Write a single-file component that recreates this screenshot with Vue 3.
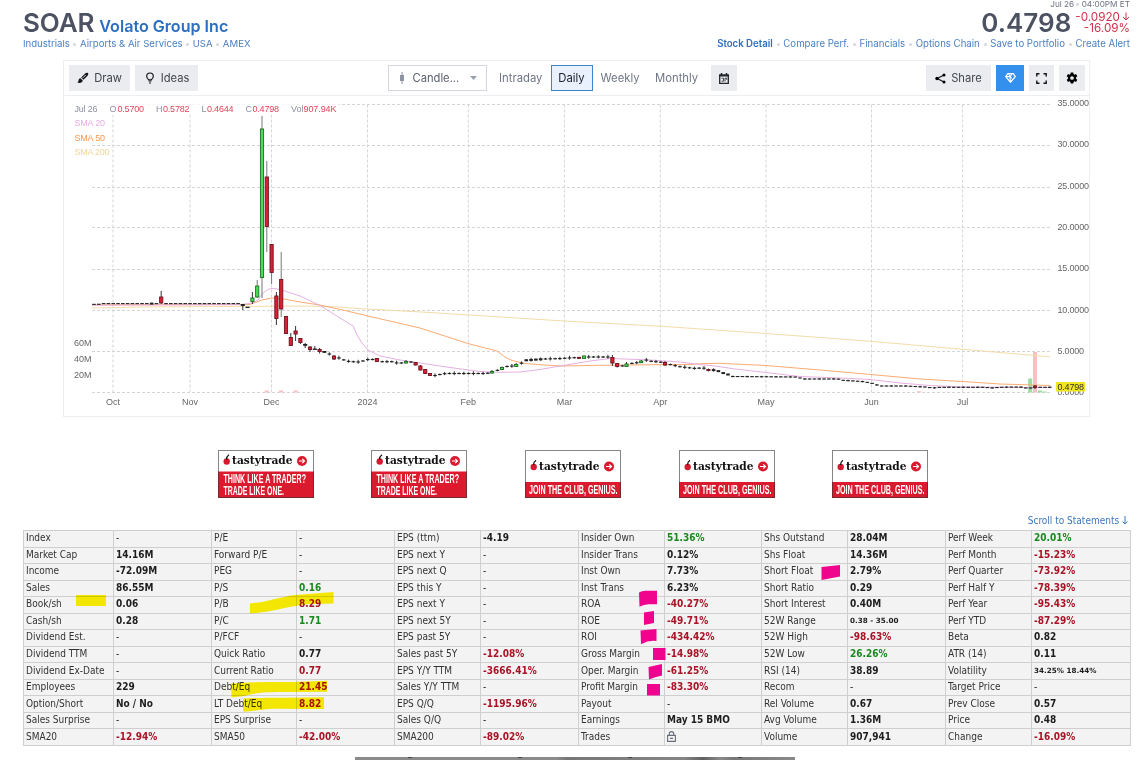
<template>
  <div class="page">
    <header class="quote-header">
      <div class="company">
        <div class="title">
          <h1>SOAR</h1>
          <h2>Volato Group Inc</h2>
        </div>
        <div class="links">
          <template v-for="(tag, i) in tags" :key="tag">
            <i v-if="i" class="dot"></i><a>{{ tag }}</a>
          </template>
        </div>
      </div>
      <div class="quote">
        <div class="date">Jul 26 <i class="dot"></i> 04:00PM ET</div>
        <div class="price-row">
          <span class="price">0.4798</span>
          <span class="change">
            <span>-0.0920<svg width="8" height="9" viewBox="0 0 8 9"><path d="M4 .5v7.4M1 5l3 3 3-3" /></svg></span>
            <span>-16.09<small>%</small></span>
          </span>
        </div>
        <div class="links right">
          <template v-for="(tab, i) in tabs" :key="tab">
            <i v-if="i" class="dot"></i><a :class="{ current: i === 0 }">{{ tab }}</a>
          </template>
        </div>
      </div>
    </header>

    <section class="chart">
      <div class="toolbar">
        <div class="group">
          <button class="btn draw">
            <svg width="12" height="12" viewBox="0 0 12 12">
              <path d="M10.9 1.1c-.8-.7-2-.4-3 .6L4.200 5.500l2.300 2.300 3.800-3.700c1-1 1.300-2.300.6-3zM3.500 6.200c-1.200.1-1.700.9-1.900 2-.1.900-.5 1.700-1.200 2.300 2 .9 5.100.5 5.400-2z" fill="#14161a" />
              <path d="M5.800 5.900l3-3" stroke="#ebecef" stroke-width=".9" />
            </svg>
            Draw
          </button>
          <button class="btn ideas">
            <svg width="12" height="12" viewBox="0 0 12 12" fill="none" stroke="#14161a">
              <path d="M4.700 7.800C3.400 6.900 2.700 5.900 2.700 4.300a3.300 3.300 0 0 1 6.600 0c0 1.600-.7 2.600-2 3.500z" stroke-width="1.200" />
              <path d="M4.500 9h3M5 11h2" stroke-width="1.200" />
            </svg>
            Ideas
          </button>
        </div>
        <div class="group mid">
          <button class="select">
            <svg width="6" height="12" viewBox="0 0 6 12">
              <path d="M1 3h4v6H1zM2.500 0h1v12h-1z" fill="#8e94a3" />
            </svg>
            <span>Candle...</span>
            <svg width="7" height="4" viewBox="0 0 7 4"><path d="M0 0h7L3.500 4z" fill="#9a9fae" /></svg>
          </button>
          <a class="range intraday">Intraday</a>
          <a class="range active">Daily</a>
          <a class="range weekly">Weekly</a>
          <a class="range monthly">Monthly</a>
          <button class="btn icon">
            <svg width="10" height="11" viewBox="0 0 10 11" fill="none" stroke="#22252b">
              <path d="M.7 2h8.600v8.300H.7z" stroke-width="1.300" />
              <path d="M0 2.700h10M2.500 0v2M7.500 0v2" stroke-width="1.500" />
              <path d="M2.500 5.200h2v3h-2M6 8.500V5.200h1.700v1.600" stroke-width=".8" />
            </svg>
          </button>
        </div>
        <div class="group">
          <button class="btn share">
            <svg width="11" height="11" viewBox="0 0 11 11">
              <path d="M9 2L2.200 5.500 9 9" fill="none" stroke="#14161a" stroke-width="1.200" />
              <circle cx="9" cy="2" r="1.500" /><circle cx="2" cy="5.500" r="1.700" /><circle cx="9" cy="9" r="1.500" />
            </svg>
            Share
          </button>
          <button class="btn elite">
            <svg width="11" height="10" viewBox="0 0 11 10" fill="none" stroke="#fff">
              <path d="M2.800.7h5.400l2.100 2.900L5.500 9.200.7 3.600z" stroke-width="1.300" />
              <path d="M.7 3.600h4.200L3.800 1.200M5.500 9L4.900 3.600l2-2.500M5 3.800l1.800 1.400" stroke-width="1.100" />
            </svg>
          </button>
          <button class="btn full">
            <svg width="11" height="11" viewBox="0 0 11 11" fill="none" stroke="#14161a" stroke-width="1.400">
              <path d="M.8 3.500V.8h2.700M7.500.8h2.700v2.700M10.200 7.500v2.700H7.500M3.500 10.200H.8V7.500" />
            </svg>
          </button>
          <button class="btn icon">
            <svg width="12" height="12" viewBox="0 0 24 24">
              <path fill-rule="evenodd" d="M9.500 1h5l.6 3.200 1.900 1.100 3.100-1.100 2.500 4.300-2.500 2.200v2.600l2.500 2.200-2.500 4.300-3.100-1.100-1.900 1.100-.6 3.200h-5l-.6-3.200L7 18.700l-3.100 1.100-2.500-4.300 2.500-2.200v-2.600L1.400 8.500l2.500-4.300L7 5.300l1.900-1.100zM12 8.300a3.700 3.700 0 1 0 0 7.400 3.700 3.700 0 0 0 0-7.400z" />
            </svg>
          </button>
        </div>
      </div>

      <svg class="plot" width="1025" height="320" viewBox="64 96 1025 320">
        <g class="grid">
          <line v-for="y in gridY" :key="'h' + y" x1="92" :y1="y" x2="1050" :y2="y" />
          <line v-for="m in months" :key="m.label" :x1="m.x" y1="104.500" :x2="m.x" y2="392.500" />
        </g>

        <rect v-for="v in volumes" :key="v.x" :x="v.x - 2" :y="392.500 - v.h" width="4" :height="v.h" :fill="v.up ? '#9bdc9f' : '#fcbdc3'" />

        <polyline class="sma" :points="sma200" stroke="#f3dcaa" />
        <polyline class="sma" :points="sma50" stroke="#fbab73" />
        <polyline class="sma" :points="sma20" stroke="#e7b0e2" />

        <g v-for="c in candles" :key="c.x">
          <line :x1="c.x" :y1="c.high" :x2="c.x" :y2="c.low" :stroke="c.high < 290 ? '#777' : '#333'" />
          <rect :x="c.x - c.w / 2" :y="c.top" :width="c.w" :height="c.bottom - c.top" :fill="c.fill" :stroke="c.stroke" :stroke-width="c.line" />
        </g>

        <g class="axis">
          <text v-for="m in months" :key="m.label" :x="m.x" y="405" text-anchor="middle">{{ m.label }}</text>
          <text v-for="p in prices" :key="p.label" x="1057.500" :y="p.y" :textLength="p.label.length > 6 ? 31.500 : 26.500">{{ p.label }}</text>
          <text x="74" y="346">60M</text>
          <text x="74" y="362.300">40M</text>
          <text x="74" y="378.300">20M</text>
        </g>
        <rect x="1056" y="382" width="29" height="9.500" fill="#f2e71f" />
        <text class="last" x="1057.500" y="390" textLength="26.500">0.4798</text>

        <rect x="73" y="101" width="266" height="14" fill="#fff" opacity=".75" />
        <g class="ohlc">
          <text v-for="t in ohlc" :key="t.text" :x="t.x" y="112" :textLength="t.w" :class="{ val: t.val }">{{ t.text }}</text>
          <text x="74.500" y="126" textLength="30.500" fill="#e9ace5">SMA 20</text>
          <text x="74.500" y="141" textLength="30.500" fill="#f89650">SMA 50</text>
          <text x="74.500" y="155" textLength="35" fill="#efd59b">SMA 200</text>
        </g>
      </svg>
    </section>

    <div class="ads">
      <svg v-for="(ad, i) in ads" :key="i" width="96" height="48" viewBox="0 0 96 48">
        <rect width="96" height="48" fill="#fff" />
        <rect y="21.500" width="96" height="26.500" fill="#dc1a2d" v-if="ad.length > 1" />
        <rect y="32" width="96" height="16" fill="#dc1a2d" v-else />
        <rect x=".5" y=".5" width="95" height="47" fill="none" stroke="#333" stroke-opacity=".6" />
        <g :transform="ad.length > 1 ? 'translate(0 0)' : 'translate(0 5.500)'">
          <circle cx="8.700" cy="11.500" r="3.200" fill="#d31b2f" />
          <path d="M8.500 9.500c0-2 .8-3.600 2.500-4.800" fill="none" stroke="#111" stroke-width="1.200" />
          <text class="brand" x="14" y="14.300" textLength="60.500" lengthAdjust="spacingAndGlyphs">tastytrade</text>
          <circle cx="84" cy="11" r="5" fill="#dc1a2d" />
          <path d="M81 11h5.500M84.300 8.800l2.200 2.200-2.200 2.200" fill="none" stroke="#fff" stroke-width="1.200" />
        </g>
        <template v-if="ad.length > 1">
          <text class="slogan" x="5.500" y="33.300" textLength="82.500" lengthAdjust="spacingAndGlyphs">{{ ad[0] }}</text>
          <text class="slogan" x="5.500" y="44.700" textLength="60.500" lengthAdjust="spacingAndGlyphs">{{ ad[1] }}</text>
        </template>
        <text v-else class="slogan" x="4" y="44.200" textLength="88.500" lengthAdjust="spacingAndGlyphs">{{ ad[0] }}</text>
      </svg>
    </div>

    <a class="scroll-link">Scroll to Statements <svg width="6" height="9" viewBox="0 0 6 9"><path d="M3 0v8M.5 5.500L3 8l2.500-2.500" /></svg></a>

    <div class="snapshot">
      <table>
        <colgroup>
          <col v-for="(w, i) in colWidths" :key="i" :style="{ width: w + 'px' }" />
        </colgroup>
        <tbody>
          <tr v-for="(row, r) in rows" :key="r">
            <template v-for="(cell, c) in row" :key="c">
              <td>{{ cell[0] }}</td>
              <td class="value" :class="[cell[2], { empty: cell[1] === '-' }]">
                <svg v-if="cell[1] === 'lock'" width="9" height="11" viewBox="0 0 9 11">
                  <path d="M.6 4.400h7.800v6H.6zM2.300 4.400V2.800a2.200 2.200 0 0 1 4.400 0v1.600M3 7.400h3" />
                </svg>
                <template v-else>{{ cell[1] }}</template>
              </td>
            </template>
          </tr>
        </tbody>
      </table>
      <!-- marker strokes over the table -->
      <svg class="marks yellow" width="1108" height="216" viewBox="23 530 1108 216">
        <path d="M76 595h30v11H76z" />
        <path d="M250 603.500C270 602 284 595 302 594.500L333.500 592v11.500l-20 .5c-20 0-38 8-63.500 9.500z" />
        <path d="M231 683.500c20-1.500 40-1.500 60-1.500l36-1.300v11l-40 .3c-20 0-30 .5-43 4l-12.500 1.500z" />
        <path d="M243 698.500c15-1 25-.5 40-.8l41-.5v11.800l-50-.3c-10 0-17 2.300-31 2.800z" />
      </svg>
      <svg class="marks pink" width="1108" height="216" viewBox="23 530 1108 216">
        <path d="M639 592.500q3-1.800 6-1.800h12v13.500h-7q-6-.3-10.500 2.500z" />
        <path d="M644 612.500l10-1.500v12l-10 2z" />
        <path d="M640.500 630.500l16-1.500v12q-8-1-15.500 3.200z" />
        <path d="M653 648h12.500v12H653z" />
        <path d="M648.500 667l13.500-3v11.500q-7 1.500-13 4z" />
        <path d="M647 684h13v11.500h-13z" />
        <path d="M821.500 567l18.500-2v11.500l-18.500 3.500z" />
      </svg>
    </div>
    <div class="photo"><i></i><i></i><i></i><i></i></div>
  </div>
</template>

<script setup>
const tags = ['Industrials', 'Airports & Air Services', 'USA', 'AMEX']
const tabs = ['Stock Detail', 'Compare Perf.', 'Financials', 'Options Chain', 'Save to Portfolio', 'Create Alert']

const gridY = [104.5, 145.5, 187.5, 227.5, 269.5, 310.5, 351.5, 392.5]
const prices = ['35.0000', '30.0000', '25.0000', '20.0000', '15.0000', '10.0000', '5.0000', '0.0000'].map((label, i) => ({
  label,
  y: 106 + i * 41.3
}))
const months = [
  { label: 'Oct', x: 113 }, { label: 'Nov', x: 190 }, { label: 'Dec', x: 271.5 },
  { label: '2024', x: 367.5 }, { label: 'Feb', x: 468.3 }, { label: 'Mar', x: 564.4 },
  { label: 'Apr', x: 660.3 }, { label: 'May', x: 766 }, { label: 'Jun', x: 871.5 }, { label: 'Jul', x: 962.6 }
]
const ohlc = [
  { text: 'Jul 26', x: 74.5, w: 23 },
  { text: 'O', x: 109.5, w: 6.5 }, { text: '0.5700', x: 117.5, w: 26.5, val: true },
  { text: 'H', x: 156, w: 6 }, { text: '0.5782', x: 163, w: 26.5, val: true },
  { text: 'L', x: 201.5, w: 5 }, { text: '0.4644', x: 207, w: 26.5, val: true },
  { text: 'C', x: 245.5, w: 6 }, { text: '0.4798', x: 252.5, w: 26.5, val: true },
  { text: 'Vol', x: 291, w: 12.5 }, { text: '907.94K', x: 303.5, w: 33, val: true }
]

const volumes = [
  { x: 266.7, h: 2 }, { x: 281, h: 2 }, { x: 295.6, h: 2 }, { x: 919, h: 1.3 },
  { x: 1030.2, h: 14, up: true }, { x: 1035, h: 40.5 }, { x: 1040, h: 2, up: true }, { x: 1044.5, h: 1, up: true }
]

// candles with a visible body: x, high, top, bottom, low, direction
const big = [
  [161.2, 291, 297, 303, 304, 'd'], [242.8, 304, 304.5, 305.5, 310, 'k'], [247.6, 307, 307.2, 307.6, 308, 'k'],
  [252.4, 292, 298, 301.5, 304, 'u'], [257.2, 280, 286, 297, 298, 'u'], [262, 116, 129, 277.5, 298, 'u'],
  [266.8, 161, 177, 226.5, 252, 'd'], [271.6, 244, 244.5, 272.5, 284, 'd'], [276.4, 292, 296, 318.5, 325, 'd'],
  [281.2, 252, 279.5, 309, 317, 'd'], [286, 316, 316.5, 333.5, 334, 'd'], [290.8, 333, 337.5, 345.5, 346, 'd'],
  [295.6, 326, 331, 334, 341, 'd'], [300.4, 338, 338.5, 342.5, 344, 'd'], [305.2, 343, 344.5, 345.3, 348, 'k'],
  [310, 346, 347, 349.5, 352, 'd'], [314.8, 346, 349, 349.4, 350, 'k'], [319.6, 348, 349.5, 351.5, 353.5, 'd'],
  [324.4, 351, 351.5, 352.3, 353, 'k'], [334, 355, 356, 359, 360, 'd'], [376.9, 358, 358.5, 361.5, 362, 'd'],
  [406, 360, 361.5, 363, 363.5, 'u'], [415.6, 362, 362.5, 365, 365.5, 'd'], [420.4, 365, 366, 370, 370.5, 'd'],
  [425.2, 369, 369.5, 373.5, 374, 'd'], [430, 373, 373.5, 375.5, 376, 'd'], [492, 370, 371.5, 373, 373.5, 'u'],
  [502, 366.5, 367.5, 369.5, 370, 'u'], [516.2, 363, 364.5, 366.5, 367, 'u'], [579, 357, 357.3, 358.3, 359, 'd'],
  [584, 355.5, 356, 358.5, 359, 'u'], [612.4, 355, 357.5, 363, 366, 'd'], [617.2, 363, 363.5, 366.5, 367.5, 'd'],
  [626.5, 362, 364, 366.5, 367, 'u'], [641.2, 360, 361, 362.7, 363, 'u'], [665, 361, 362.5, 365, 366, 'd'],
  [708.4, 368.5, 369.5, 370.5, 371.5, 'd'], [1035, 385, 386, 387.5, 389, 'd']
]
// level of the small candles between the big ones
const level = [
  [92, 304.4], [101, 304.2], [103, 303.6], [240, 303.6], [328, 353.5], [339, 358], [344, 360], [349, 361.5], [358, 362], [363, 361],
  [368, 359.5], [373, 359.5], [380, 361.7], [392, 361.7], [397, 363], [402, 363], [410, 361.5], [435, 375.5], [440, 374.5],
  [446, 373.5], [487, 373.5], [497, 370.5], [507, 366.5], [511, 366.3], [521, 363.5], [526, 360.3], [545, 359], [560, 358.6],
  [569, 358], [588, 357], [608, 357], [622, 366], [631, 363.5], [636, 363], [646, 360], [651, 361.3], [660, 362], [670, 364.5],
  [680, 366.7], [694, 368.4], [703, 368], [713, 370], [718, 371], [723, 373], [728, 374.5], [732, 376.5], [795, 377],
  [805, 379], [838, 379], [843, 380.3], [862, 381.5], [871, 383], [876, 384.7], [881, 386], [905, 386], [925, 387],
  [933, 388], [940, 387.3], [985, 387.3], [991, 388], [1000, 387.3], [1020, 387], [1026, 388], [1031, 388], [1040, 387.3], [1052, 387.3]
]

function levelAt(x) {
  const i = level.findIndex(p => p[0] >= x)
  if (i < 1) return level[0][1]
  const [x0, y0] = level[i - 1]
  const [x1, y1] = level[i]
  return y0 + ((y1 - y0) * (x - x0)) / (x1 - x0)
}

const colors = { u: ['#46dd57', '#1f6b26'], d: ['#dc1f35', '#6b1420'], k: ['#222', '#222'] }
const candles = big.map(([x, high, top, bottom, low, dir]) => ({
  x, high, top, bottom, low, w: 3.2, line: 0.9, fill: colors[dir][0], stroke: colors[dir][1]
}))
for (let i = 0; i < 200; i++) {
  const x = 94 + i * 4.803
  if ((x > 240 && x < 327) || big.some(b => Math.abs(b[0] - x) < 2.5)) continue
  const y = levelAt(x)
  const wick = x < 240 ? 0 : x < 720 ? [1, 1.8, 1.1, 2.2][i % 4] : [0.3, 0.9, 0.4][i % 3]
  const half = (x > 149 && x < 153) || (x > 525 && x < 545) || (x > 712 && x < 730) ? 1 : 0.55
  candles.push({ x, high: y - wick, low: y + wick * 0.8, top: y - half, bottom: y + half, w: 3.6, line: 0, fill: '#222', stroke: 'none' })
}

const sma20 = '92,305.2 240,304.7 253,303 258,300 262,294 268,289.3 273,288.3 280,289.5 300,296 320,305.5 340,318 353,326 357,335 362,343 368,350 380,356 400,360 420,363 450,367.5 480,371.5 500,372.3 520,372 540,369.5 560,366 590,361 610,358.5 625,359 650,360 680,362 700,364.5 715,366 735,369 770,373 800,376.5 840,378 870,379.5 900,383 930,385.5 965,387 1050,387.6'
const sma50 = '92,304.9 250,304.4 262,300 272,298 284,299 300,302 320,305 345,310.5 368,316 420,328 468,343.5 497,351 505,357 512,360.5 525,363.5 540,364.7 560,366 600,365.3 660,364.7 690,364.5 705,363.5 720,363.3 766,365.5 820,370 871,374.5 920,379 965,381.7 1000,384 1050,385.5'
const sma200 = '92,308 140,307 260,306.3 300,306 330,306.5 367,309 430,312.5 564,321 660,326.2 766,333.5 871,341.3 965,349.5 1050,356.8'

const trader = ['THINK LIKE A TRADER?', 'TRADE LIKE ONE.']
const genius = ['JOIN THE CLUB, GENIUS.']
const ads = [trader, trader, genius, genius, genius]

const colWidths = [90, 98, 85, 98, 86, 98, 86, 97, 86, 98, 86, 99]
const rows = [
  [['Index', '-'], ['P/E', '-'], ['EPS (ttm)', '-4.19'], ['Insider Own', '51.36%', 'up'], ['Shs Outstand', '28.04M'], ['Perf Week', '20.01%', 'up']],
  [['Market Cap', '14.16M'], ['Forward P/E', '-'], ['EPS next Y', '-'], ['Insider Trans', '0.12%'], ['Shs Float', '14.36M'], ['Perf Month', '-15.23%', 'down']],
  [['Income', '-72.09M'], ['PEG', '-'], ['EPS next Q', '-'], ['Inst Own', '7.73%'], ['Short Float', '2.79%'], ['Perf Quarter', '-73.92%', 'down']],
  [['Sales', '86.55M'], ['P/S', '0.16', 'up'], ['EPS this Y', '-'], ['Inst Trans', '6.23%'], ['Short Ratio', '0.29'], ['Perf Half Y', '-78.39%', 'down']],
  [['Book/sh', '0.06'], ['P/B', '8.29', 'down'], ['EPS next Y', '-'], ['ROA', '-40.27%', 'down'], ['Short Interest', '0.40M'], ['Perf Year', '-95.43%', 'down']],
  [['Cash/sh', '0.28'], ['P/C', '1.71', 'up'], ['EPS next 5Y', '-'], ['ROE', '-49.71%', 'down'], ['52W Range', '0.38 - 35.00', 'small'], ['Perf YTD', '-87.29%', 'down']],
  [['Dividend Est.', '-'], ['P/FCF', '-'], ['EPS past 5Y', '-'], ['ROI', '-434.42%', 'down'], ['52W High', '-98.63%', 'down'], ['Beta', '0.82']],
  [['Dividend TTM', '-'], ['Quick Ratio', '0.77'], ['Sales past 5Y', '-12.08%', 'down'], ['Gross Margin', '-14.98%', 'down'], ['52W Low', '26.26%', 'up'], ['ATR (14)', '0.11']],
  [['Dividend Ex-Date', '-'], ['Current Ratio', '0.77', 'down'], ['EPS Y/Y TTM', '-3666.41%', 'down'], ['Oper. Margin', '-61.25%', 'down'], ['RSI (14)', '38.89'], ['Volatility', '34.25% 18.44%', 'small']],
  [['Employees', '229'], ['Debt/Eq', '21.45', 'down'], ['Sales Y/Y TTM', '-'], ['Profit Margin', '-83.30%', 'down'], ['Recom', '-'], ['Target Price', '-']],
  [['Option/Short', 'No / No'], ['LT Debt/Eq', '8.82', 'down'], ['EPS Q/Q', '-1195.96%', 'down'], ['Payout', '-'], ['Rel Volume', '0.67'], ['Prev Close', '0.57']],
  [['Sales Surprise', '-'], ['EPS Surprise', '-'], ['Sales Q/Q', '-'], ['Earnings', 'May 15 BMO'], ['Avg Volume', '1.36M'], ['Price', '0.48']],
  [['SMA20', '-12.94%', 'down'], ['SMA50', '-42.00%', 'down'], ['SMA200', '-89.02%', 'down'], ['Trades', 'lock'], ['Volume', '907,941'], ['Change', '-16.09%', 'down']]
]
</script>

<style>
body {
  background: #fff;
  overflow: hidden;
}
</style>

<style scoped>
.page {
  width: 1143px;
  height: 760px;
  overflow: hidden;
  display: flex;
  flex-direction: column;
  font-family: Inter, sans-serif;
  color: #4c5261;
}
.quote-header {
  height: 60px;
  padding: 0 13px 0 23px;
  display: flex;
  justify-content: space-between;
}
.company {
  padding-top: 7px;
}
.title {
  display: flex;
  align-items: baseline;
  gap: 5px;
  height: 31px;
  line-height: 31px;
  white-space: nowrap;
}
h1, h2 {
  margin: 0;
}
h1 {
  font-size: 26px;
  font-weight: 600;
  letter-spacing: -0.1px;
}
h2 {
  font-size: 16.1px;
  font-weight: 600;
  color: #2b6fc0;
}
.links {
  display: flex;
  align-items: center;
  height: 12px;
  line-height: 12px;
  font-size: 9.6px;
  color: #4a80c4;
  white-space: nowrap;
}
.links .dot {
  margin: 0 3.6px;
}
.links.right {
  font-size: 9.65px;
}
.links.right .dot {
  margin: 0 3.8px;
}
.dot {
  display: inline-block;
  width: 3px;
  height: 3px;
  border-radius: 50%;
  background: #d4d7de;
  vertical-align: middle;
}
.current {
  font-weight: 600;
  color: #2b6fc0;
}
.quote {
  display: flex;
  flex-direction: column;
  align-items: flex-end;
}
.date {
  height: 7px;
  line-height: 8px;
  font-size: 8.2px;
  color: #6c7282;
}
.price-row {
  display: flex;
  height: 31px;
  gap: 4px;
}
.price {
  font-size: 26px;
  line-height: 31px;
  font-weight: 600;
}
.change {
  display: flex;
  flex-direction: column;
  align-items: flex-end;
  padding-top: 5px;
  font-size: 11.7px;
  line-height: 11px;
  color: #d3304a;
}
.change small {
  font-size: 11.7px;
}
.change svg {
  margin-left: 2px;
  fill: none;
  stroke: #d3304a;
}
.chart {
  width: 1025px;
  height: 355px;
  margin-left: 63px;
  border: 1px solid #eceef1;
}
.toolbar {
  display: flex;
  justify-content: space-between;
  height: 35px;
  padding: 4px 4px 0 5px;
  box-sizing: border-box;
  border-bottom: 1px solid #eceef1;
}
.group {
  display: flex;
  gap: 5px;
}
.group.mid {
  gap: 0;
}
button {
  display: flex;
  align-items: center;
  justify-content: center;
  box-sizing: border-box;
  height: 26px;
  padding: 0;
  border: 0;
  font: 11.2px Inter, sans-serif;
  color: #42464f;
}
.btn {
  gap: 5px;
  background: #ebecef;
}
.draw {
  width: 61px;
}
.ideas {
  width: 63px;
}
.share {
  width: 65px;
}
.elite {
  width: 28px;
  background: #3390ec;
}
.full {
  width: 25px;
}
.icon {
  width: 26px;
}
.select {
  width: 99px;
  background: #fff;
  border: 1px solid #d3d6dd;
  color: #5c6170;
  justify-content: flex-start;
  padding-left: 10px;
}
.select span {
  margin: 0 11px 0 8px;
}
.range {
  box-sizing: border-box;
  height: 26px;
  line-height: 26px;
  font-size: 11.3px;
  color: #707687;
}
.intraday {
  width: 64px;
  padding-left: 12.5px;
}
.weekly {
  width: 54px;
  padding-left: 8px;
}
.monthly {
  width: 64px;
  padding-left: 8.5px;
}
.active {
  width: 42px;
  line-height: 24px;
  text-align: center;
  border: 1px solid #3d85cb;
  background: #e8f1fd;
  color: #22252e;
}
.plot {
  display: block;
}
.grid line {
  stroke: #d5d5d8;
  stroke-dasharray: 3 2;
}
.sma {
  fill: none;
  stroke-width: 1;
}
.axis text {
  font: 9px "Liberation Sans", sans-serif;
  fill: #666;
}
.last {
  font: 9px "Liberation Sans", sans-serif;
  fill: #333;
}
.ohlc text {
  font: 9px "Liberation Sans", sans-serif;
}
.ohlc text:not([fill]) {
  fill: #8d91a0;
}
.ohlc text.val {
  fill: #e0465a;
}
.ads {
  display: flex;
  gap: 57px;
  padding: 33px 0 0 218px;
}
.ads svg:nth-child(2),
.ads svg:nth-child(3) {
  margin-right: 1px;
}
.brand {
  font: bold 11px "DejaVu Serif", serif;
  fill: #111;
}
.slogan {
  font: bold 12px "Liberation Sans Narrow", "Liberation Sans", sans-serif;
  fill: #fff;
}
.scroll-link {
  align-self: flex-end;
  height: 14px;
  margin: 16px 15px 2px 0;
  font: 10px/14px "DejaVu Sans Condensed", "DejaVu Sans", sans-serif;
  font-stretch: condensed;
  color: #3c78bd;
}
.scroll-link svg {
  fill: none;
  stroke: #3c78bd;
  vertical-align: -1px;
}
.snapshot {
  position: relative;
  margin-left: 23px;
  width: 1108px;
  height: 216px;
}
table {
  width: 1107px;
  height: 216px;
  table-layout: fixed;
  border-collapse: collapse;
  background: #f3f3f3;
  font: 10px "DejaVu Sans Condensed", "DejaVu Sans", sans-serif;
  font-stretch: condensed;
  color: #333;
}
td {
  height: 14.5px;
  padding: 0 0 1px 2px;
  border: 1px solid #cfcfcf;
  line-height: 12px;
  white-space: nowrap;
}
.value {
  font-weight: bold;
  color: #1d1d1d;
}
.value.empty {
  font-weight: normal;
}
.value svg {
  display: block;
  fill: none;
  stroke: #6a6e7b;
  stroke-width: 1.1;
}
.value.up {
  color: #188a1c;
}
.value.down {
  color: #aa1226;
}
.value.small {
  font-family: "DejaVu Sans", sans-serif;
  font-stretch: normal;
  font-size: 7.2px;
}
.marks {
  position: absolute;
  left: 0;
  top: 0;
}
.yellow {
  fill: #fff200;
  mix-blend-mode: multiply;
}
.pink {
  fill: #f0048e;
}
.photo {
  display: flex;
  justify-content: space-around;
  width: 440px;
  height: 3px;
  margin: 11px 0 0 355px;
  background: linear-gradient(90deg, #8a8a8a 0 46%, #777 48%, #858585 75%, #606060 79%, #8a8a8a 83%, #777 86%, #8a8a8a);
}
.photo i {
  width: 4px;
  height: 1px;
  background: #444;
}
</style>
